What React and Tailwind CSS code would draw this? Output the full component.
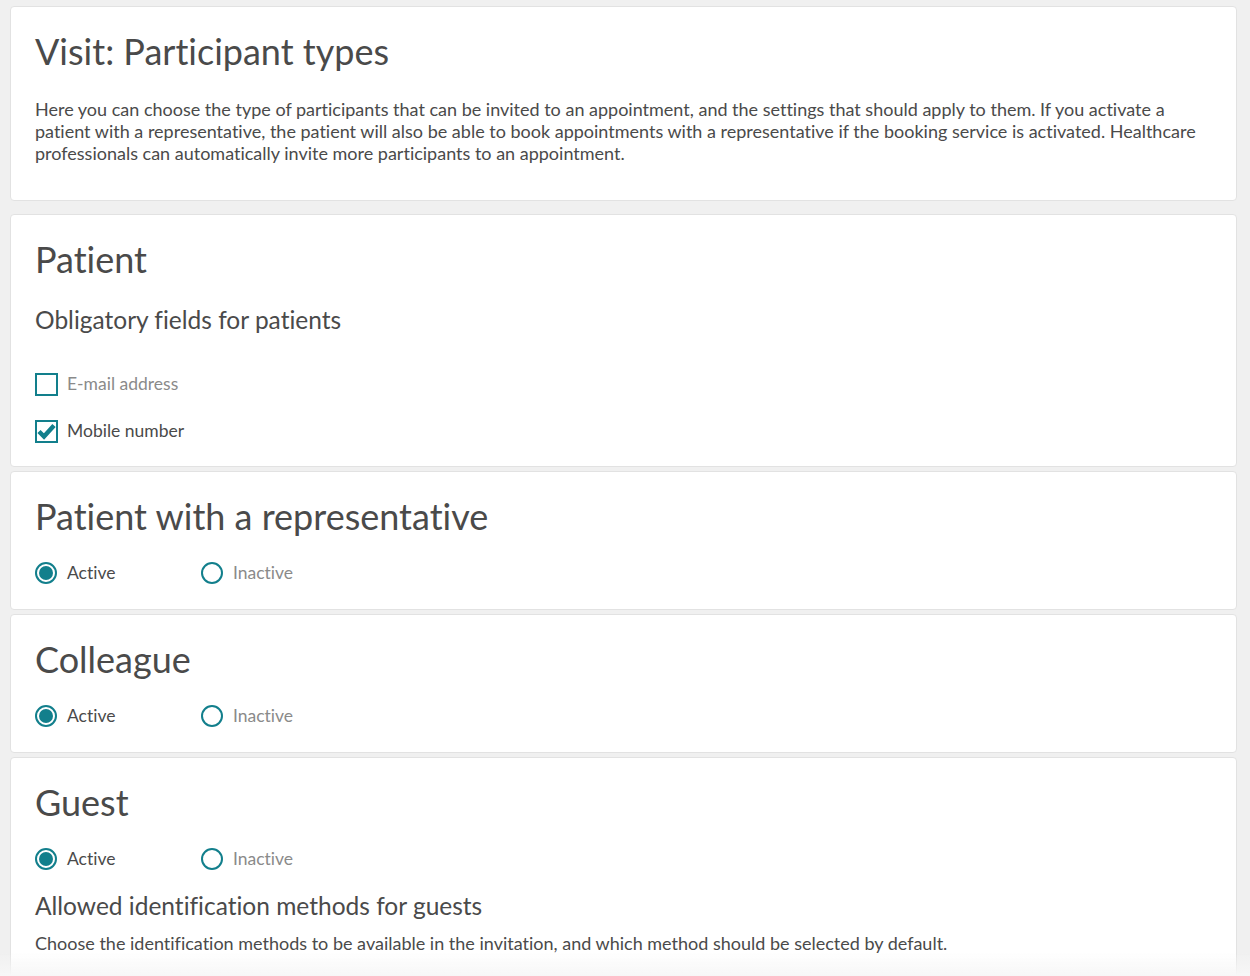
import React, { useState } from 'react'

const TEAL = '#127f8c'

const Card = ({ className = '', children }) => (
  <div className={`bg-white border border-[#e2e2e2] rounded-[4px] px-6 pt-6 ${className}`}>
    {children}
  </div>
)

const Heading = ({ children }) => (
  <h2 className="text-[36px] leading-[40px] text-[#4a4a4a] font-normal">{children}</h2>
)

const Checkbox = ({ checked, label, onChange }) => (
  <label className="flex items-center gap-[9px] h-6 cursor-pointer" onClick={onChange}>
    <span className="w-[23px] h-[23px] border-2 border-[#127f8c] flex items-center justify-center">
      {checked && (
        <svg width="19" height="19" viewBox="0 0 19 19" className="overflow-visible">
          <path d="M2 9.5 L7 14.5 L17 3.5" fill="none" stroke={TEAL} strokeWidth="4.5" strokeLinejoin="miter" />
        </svg>
      )}
    </span>
    <span className={`text-[17.5px] ${checked ? 'text-[#4a4a4a]' : 'text-[#8a8a8a]'}`}>{label}</span>
  </label>
)

const Radio = ({ checked, label, onClick }) => (
  <label className="flex items-center gap-[10px] w-[166px] h-[22px] cursor-pointer" onClick={onClick}>
    <span className="w-[22px] h-[22px] rounded-full border-2 border-[#127f8c] flex items-center justify-center">
      {checked && <span className="w-[14px] h-[14px] rounded-full bg-[#127f8c]" />}
    </span>
    <span className={`text-[17.5px] ${checked ? 'text-[#4a4a4a]' : 'text-[#8a8a8a]'}`}>{label}</span>
  </label>
)

const ActiveToggle = ({ value, setValue, className = '' }) => (
  <div className={`flex ${className}`}>
    <Radio checked={value} label="Active" onClick={() => setValue(true)} />
    <Radio checked={!value} label="Inactive" onClick={() => setValue(false)} />
  </div>
)

export default function App() {
  const [email, setEmail] = useState(false)
  const [mobile, setMobile] = useState(true)
  const [rep, setRep] = useState(true)
  const [colleague, setColleague] = useState(true)
  const [guest, setGuest] = useState(true)

  return (
    <div
      className="min-h-screen bg-[#f0f0f0] pt-[6px] pl-[10px] pr-[13px] text-[#4a4a4a] [font-variant-ligatures:none]"
      style={{ fontFamily: 'Lato, "Open Sans", sans-serif' }}
    >
      {/* intro */}
      <Card className="pb-[36px]">
        <h1 className="text-[36px] leading-[40px] font-normal">Visit: Participant types</h1>
        <p className="mt-[27px] text-[18px] leading-[22px]">
          Here you can choose the type of participants that can be invited to an appointment, and the settings that should apply to them. If you activate a patient with a representative, the patient will also be able to book appointments with a representative if the booking service is activated. Healthcare professionals can automatically invite more participants to an appointment.
        </p>
      </Card>

      <div className="mt-[13px] flex flex-col gap-1">
        <Card className="pb-[23px]">
          <Heading>Patient</Heading>
          <h3 className="mt-[26px] text-[24.5px] leading-[30px] font-normal">Obligatory fields for patients</h3>
          <div className="mt-[37px] flex flex-col gap-[23px]">
            <Checkbox checked={email} label="E-mail address" onChange={() => setEmail(!email)} />
            <Checkbox checked={mobile} label="Mobile number" onChange={() => setMobile(!mobile)} />
          </div>
        </Card>

        <Card className="pb-[25px]">
          <Heading>Patient with a representative</Heading>
          <ActiveToggle value={rep} setValue={setRep} className="mt-[26px]" />
        </Card>

        <Card className="pb-[25px]">
          <Heading>Colleague</Heading>
          <ActiveToggle value={colleague} setValue={setColleague} className="mt-[26px]" />
        </Card>

        <Card className="pb-[40px]">
          <Heading>Guest</Heading>
          <ActiveToggle value={guest} setValue={setGuest} className="mt-[26px]" />
          <h3 className="mt-[21px] text-[24.5px] leading-[30px] font-normal">Allowed identification methods for guests</h3>
          <p className="mt-[11px] text-[18px] leading-[22px]">
            Choose the identification methods to be available in the invitation, and which method should be selected by default.
          </p>
        </Card>
      </div>

      <div className="fixed left-0 right-0 bottom-0 h-[24px] bg-gradient-to-b from-transparent to-[#f7f7f7] pointer-events-none" />
    </div>
  )
}
